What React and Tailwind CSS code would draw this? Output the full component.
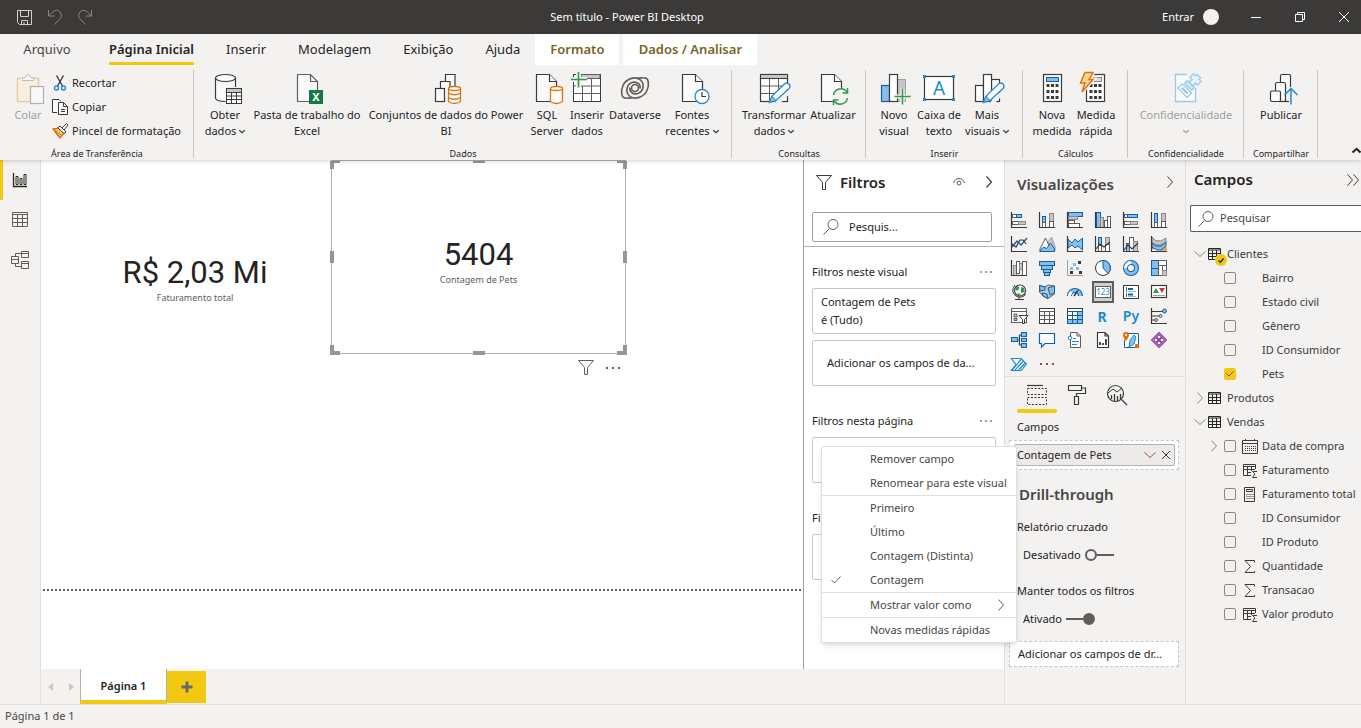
import React, { useState } from 'react';

/* ---------- colours shared by the drawings ---------- */
const INK = '#3b3a39';
const GREY = '#605e5c';
const BLUE = '#1e8bcd';
const NAVY = '#1060a8';
const SKY = '#83beec';
const ORANGE = '#e0700a';
const GREEN = '#2f9a4c';

const Svg = ({ w = 16, h = 16, box, className = '', children }) => (
    <svg
        width={w}
        height={h}
        viewBox={box || `0 0 ${w} ${h}`}
        fill="none"
        stroke={INK}
        className={`shrink-0 overflow-visible ${className}`}
        aria-hidden="true"
    >
        {children}
    </svg>
);

const Chevron = ({ dir = 'down', w = 12, h = 6, color = GREY, stroke = 1, className = '' }) => {
    const paths = {
        down: 'M0.5 0.5 L6 5.5 L11.5 0.5',
        right: 'M0.5 0.5 L5.5 6 L0.5 11.5',
    };
    return (
        <Svg w={w} h={h} box={dir === 'down' ? '0 0 12 6' : '0 0 6 12'} className={className}>
            <path d={paths[dir]} stroke={color} strokeWidth={stroke} />
        </Svg>
    );
};

/* ---------- ribbon drawings, all on a 32px grid ---------- */
const Page = ({ x = 5.5 }) => (
    <g fill="#fafafa" strokeWidth="1.2">
        <path d={`M${x} 2.5 h13 l7 7 v20 h-20 z`} />
        <path d={`M${x + 13} 2.5 v7 h7`} />
    </g>
);

const Pencil = ({ x = 11 }) => (
    <g transform={`translate(${x} 31)`}>
        <path d="M0.5 -0.5 L3 -7 L15.5 -19 Q18 -21 20 -19 Q22 -17 20 -14.5 L7 -2.5 Z" fill="#fff" stroke={BLUE} strokeWidth="1.3" />
        <path d="M0.5 -0.5 L3 -7 L7 -2.5 Z" fill={SKY} stroke={BLUE} />
    </g>
);

const Calculator = ({ x = 7.5, screen = SKY, edge = NAVY }) => (
    <g>
        <rect x={x} y="2.5" width="18" height="27" fill="#fff" strokeWidth="1.2" />
        <rect x={x + 3} y="5.5" width="12" height="4" fill={screen} stroke={edge} />
        {[12, 18, 24].map(y => [3, 7.5, 12].map(dx => (
            <rect key={`${y}-${dx}`} x={x + dx} y={y} width="3" height="3" fill={INK} stroke="none" />
        )))}
    </g>
);

const ribbonIcons = {
    paste: (
        <>
            <path d="M9 6.5 H5.5 V29.5 H20 M22 6.5 H26.5 V13" stroke="#ecc9a3" strokeWidth="1.6" />
            <path d="M6.5 8 H25.5 V14 H19 V28.5 H6.5z" fill="#f8efdc" stroke="none" />
            <path d="M10.5 8.5 v-3 h3 q2.5 -6 5 0 h3 v3z" fill="#f8f8f8" stroke="#bdbbb9" />
            <rect x="18.5" y="14.5" width="13" height="17" fill="#f8f8f8" stroke="#b3b0ad" strokeWidth="1.2" />
        </>
    ),
    getData: (
        <>
            <path d="M7 6 V26 Q8 29 16 29 V15 H26 V6z" fill="#fafafa" stroke="none" />
            <path d="M6.5 6 V26 Q7 29.5 16.5 29.5 M26.5 6 V15" strokeWidth="1.2" />
            <ellipse cx="16.5" cy="6" rx="10" ry="3.5" fill="#fafafa" strokeWidth="1.2" />
            <rect x="17.5" y="16.5" width="15" height="15" fill="#fff" />
            <rect x="18" y="17" width="14" height="3" fill="#c8c6c4" stroke="none" />
            <path d="M17.5 20.5 h15 M17.5 24 h15 M17.5 27.5 h15 M22.5 20 v11 M27.5 20 v11" />
        </>
    ),
    excel: (
        <>
            <path d="M6.5 2.5 h13 l7 7 v20 h-20 z M19.5 2.5 v7 h7" fill="#fafafa" stroke={GREY} strokeWidth="1.2" />
            <rect x="18" y="18" width="14" height="14" fill="#107c41" stroke="none" />
            <text x="25" y="29" textAnchor="middle" fontSize="11" fontWeight="700" fill="#fff" stroke="none">X</text>
        </>
    ),
    datasets: (
        <>
            <g fill="#fafafa" strokeWidth="1.2">
                <path d="M15.5 9 V2.5 H25 V14" />
                <path d="M10.5 16 V9.5 H20 V29" />
                <rect x="5.5" y="16.5" width="9" height="13" />
            </g>
            <g fill="#fff" stroke={ORANGE} strokeWidth="1.3">
                <path d="M18.5 16.5 V29.5 Q24.5 33.5 30.5 29.5 V16.5" />
                <ellipse cx="24.5" cy="16.5" rx="6" ry="2" />
                <path d="M18.5 21 Q24.5 24.5 30.5 21 M18.5 25.5 Q24.5 29 30.5 25.5" fill="none" />
            </g>
        </>
    ),
    sql: (
        <>
            <Page />
            <g fill="#fff" stroke={ORANGE} strokeWidth="1.3">
                <path d="M19.5 16.5 V29.5 Q25.5 33.5 31.5 29.5 V16.5" />
                <ellipse cx="25.5" cy="16.5" rx="6" ry="2" />
            </g>
        </>
    ),
    enterData: (
        <>
            <rect x="2.5" y="2.5" width="27" height="27" fill="#fff" />
            <rect x="10" y="2.5" width="19" height="4" fill="#c8c6c4" stroke={GREY} />
            <path d="M2.5 14 h27 M2.5 21.5 h27 M11.5 14 v15 M20.5 7 v22" stroke={GREY} />
            <path d="M0 7.5 h16 M7.5 0 v15.5" stroke="#f3f2f1" strokeWidth="5" />
            <path d="M0 7.5 h16 M7.5 0 v15.5" stroke={GREEN} strokeWidth="1.6" />
        </>
    ),
    dataverse: (
        <g stroke={GREY} strokeWidth="1.6">
            <path d="M7.5 26 C2 27 1.500 19 4 13.500 C7 7 16 3.500 21.500 8 C26 12 24.500 19.500 19 21.500 C14 23 10 19.500 11 15.500" />
            <path d="M24.500 6 C30 5 30.500 13 28 18.500 C25 25 16 28.500 10.500 24 C6 20 7.500 12.500 13 10.500 C18 9 22 12.500 21 16.500" />
            <circle cx="16" cy="16" r="3.500" />
            <path d="M7.5 26 Q11 26.500 14 25.500 M24.500 6 Q21 5.500 18 6.500" />
        </g>
    ),
    recent: (
        <>
            <Page x={6.5} />
            <circle cx="26" cy="24.5" r="7" fill="#fff" stroke={BLUE} strokeWidth="1.3" />
            <path d="M26 20 v4.5 h4" strokeWidth="1.2" />
        </>
    ),
    transform: (
        <>
            <rect x="2.5" y="2.5" width="27" height="27" fill="#fff" strokeWidth="1.2" />
            <rect x="2.5" y="2.5" width="27" height="4" fill="#c8c6c4" />
            <path d="M2.5 14 h27 M2.5 21.5 h27 M11.5 7 v22 M20.5 7 v22" stroke={GREY} />
            <path d="M19 31 L31 19" stroke="#f3f2f1" strokeWidth="5" />
            <Pencil x={11} />
        </>
    ),
    refresh: (
        <>
            <Page x={4.5} />
            <circle cx="23.5" cy="24.5" r="8" fill="#f3f2f1" stroke="none" />
            <g stroke={GREEN} strokeWidth="1.5">
                <path d="M16.5 23 a7.3 7.3 0 0 1 13.5 -2.5 M30.5 26 a7.3 7.3 0 0 1 -13.5 2.5" />
                <path d="M30.5 16 v5 h-5 M16.5 33 v-5 h5" />
            </g>
        </>
    ),
    newVisual: (
        <>
            <rect x="3.5" y="13.5" width="8" height="16" fill={SKY} stroke={NAVY} strokeWidth="1.2" />
            <rect x="19.5" y="7.5" width="8" height="22" fill="#c8c6c4" stroke="#a19f9d" />
            <rect x="11.5" y="2.5" width="8" height="27" fill="#fff" strokeWidth="1.2" />
            <path d="M16 24.5 h16 M24.5 16.5 v16" stroke="#f3f2f1" strokeWidth="4" />
            <path d="M16.5 24.5 h16 M24.5 16.5 v16" stroke={GREEN} strokeWidth="1.5" />
        </>
    ),
    textBox: (
        <>
            <rect x="1.5" y="4.5" width="29" height="23" fill="#fff" strokeWidth="1.2" />
            {[[0, 3], [29, 3], [0, 26], [29, 26]].map(([x, y]) => (
                <rect key={`${x}-${y}`} x={x} y={y} width="3" height="3" fill={BLUE} stroke="none" />
            ))}
            <text x="16" y="23" textAnchor="middle" fontSize="19" fill={BLUE} stroke="none">A</text>
        </>
    ),
    moreVisuals: (
        <>
            <g fill="#fff" strokeWidth="1.2">
                <rect x="4.5" y="13.5" width="8" height="16" />
                <rect x="20.5" y="7.5" width="8" height="22" />
                <rect x="12.5" y="2.5" width="8" height="27" />
            </g>
            <path d="M21 31 L30 22" stroke="#f3f2f1" strokeWidth="4" />
            <Pencil x={12} />
        </>
    ),
    measure: <Calculator />,
    quickMeasure: (
        <>
            <Calculator x={6.5} screen="#e1dfdd" edge="#8a8886" />
            <path d="M5 0.5 h8 l-4 7 h4 L2 20 l3 -9 H0.5z" fill="#f8d98a" stroke="#f3f2f1" strokeWidth="4" />
            <path d="M5 0.5 h8 l-4 7 h4 L2 20 l3 -9 H0.5z" fill="#fbd68b" stroke={ORANGE} strokeWidth="1.4" />
        </>
    ),
    sensitivity: (
        <g stroke="#9cc9e4" strokeWidth="1.3">
            <path d="M17 2.5 H5.5 V29.5 H25.5 V16" fill="#f8fafb" />
            <g transform="translate(16 17) rotate(-45)">
                <path d="M3 -5 h4 v10 h-4 z" fill="#d4e8f4" />
                <path d="M7 -2.5 h4 v-3 h5 v3 h2 v5 h-2 v3 h-5 v-3 h-4z" fill="#e6f2f9" />
            </g>
            <g transform="translate(15 19) rotate(45)">
                <rect x="-7" y="-3" width="13" height="6" fill="#fff" />
                <path d="M-4.5 0 h8" strokeWidth="2.5" />
            </g>
        </g>
    ),
    publish: (
        <>
            <g fill="#fafafa" strokeWidth="1.2">
                <path d="M15.5 11 V4 Q15.5 2.5 17 2.5 H24 Q25.5 2.5 25.5 4 V15" />
                <path d="M10.5 19 V12 Q10.5 10.5 12 10.5 H19 Q20.5 10.5 20.5 12 V29" />
                <path d="M14 29.5 H26" />
                <rect x="5.5" y="19" width="10" height="10.5" rx="1.5" />
            </g>
            <path d="M26 17 V32" stroke="#f3f2f1" strokeWidth="4" />
            <path d="M26 17 V32.5 M19.5 23 L26 16.5 L32.5 23" stroke={BLUE} strokeWidth="1.5" />
        </>
    ),
};

const ribbonGroups = [
    {
        label: 'Dados',
        width: 'w-[538px]',
        items: [
            { icon: 'getData', lines: ['Obter', 'dados'], menu: true, width: 'w-[46px]' },
            { icon: 'excel', lines: ['Pasta de trabalho do', 'Excel'], width: 'w-[118px]' },
            { icon: 'datasets', lines: ['Conjuntos de dados do Power', 'BI'], width: 'w-[160px]' },
            { icon: 'sql', lines: ['SQL', 'Server'], width: 'w-[42px]' },
            { icon: 'enterData', lines: ['Inserir', 'dados'], width: 'w-[38px]' },
            { icon: 'dataverse', lines: ['Dataverse'], width: 'w-[58px]' },
            { icon: 'recent', lines: ['Fontes', 'recentes'], menu: true, width: 'w-[56px]' },
        ],
    },
    {
        label: 'Consultas',
        width: 'w-[134px]',
        items: [
            { icon: 'transform', lines: ['Transformar', 'dados'], menu: true, width: 'w-[68px]' },
            { icon: 'refresh', lines: ['Atualizar'], width: 'w-[50px]' },
        ],
    },
    {
        label: 'Inserir',
        width: 'w-[157px]',
        items: [
            { icon: 'newVisual', lines: ['Novo', 'visual'], width: 'w-10' },
            { icon: 'textBox', lines: ['Caixa de', 'texto'], width: 'w-[50px]' },
            { icon: 'moreVisuals', lines: ['Mais', 'visuais'], menu: true, width: 'w-[46px]' },
        ],
    },
    {
        label: 'Cálculos',
        width: 'w-[105px]',
        items: [
            { icon: 'measure', lines: ['Nova', 'medida'], width: 'w-[42px]' },
            { icon: 'quickMeasure', lines: ['Medida', 'rápida'], width: 'w-[46px]' },
        ],
    },
    {
        label: 'Confidencialidade',
        width: 'w-[116px]',
        items: [{ icon: 'sensitivity', lines: ['Confidencialidade', ''], menu: true, disabled: true, width: 'w-full' }],
    },
    {
        label: 'Compartilhar',
        width: 'w-[74px]',
        items: [{ icon: 'publish', lines: ['Publicar'], width: 'w-full' }],
    },
];

const RibbonButton = ({ item }) => (
    <button className={`flex flex-col items-center gap-[3px] shrink-0 ${item.width} ${item.disabled ? 'text-[#a19f9d]' : ''}`} disabled={item.disabled}>
        <Svg w={32} h={32}>{ribbonIcons[item.icon]}</Svg>
        <span className="flex flex-col items-center leading-4 whitespace-nowrap">
            {item.lines.map((line, i) => (
                <span key={i} className="flex items-center gap-[3px] h-4">
                    {line}
                    {item.menu && i === item.lines.length - 1 && (
                        <Chevron w={6} h={3} color={item.disabled ? '#a19f9d' : INK} stroke={2.5} />
                    )}
                </span>
            ))}
        </span>
    </button>
);

const RibbonGroup = ({ label, width, children }) => (
    <section className={`relative flex flex-col shrink-0 ${width} after:absolute after:right-0 after:top-[5px] after:bottom-[2px] after:w-px after:bg-[#c8c6c4]`}>
        <div className="flex px-2 pt-[7px] grow">{children}</div>
        <h2 className="text-[9px] leading-[13px] text-center">{label}</h2>
    </section>
);

const tabs = ['Página Inicial', 'Inserir', 'Modelagem', 'Exibição', 'Ajuda'];

const TitleBar = () => (
    <header className="flex items-center h-[34px] shrink-0 bg-[#3b3a39] text-white">
        <div className="flex items-center gap-4 pl-[17px]">
            <button aria-label="Salvar">
                <Svg w={15} h={15}>
                    <path d="M0.5 0.5 h14 v14 h-12 l-2 -2z M3.5 0.5 v6 h8 v-6 M4.5 14.5 v-4 h6 v4 M7 14 v-2" stroke="#d2d0ce" />
                </Svg>
            </button>
            <button aria-label="Desfazer">
                <Svg w={14} h={16}>
                    <path d="M0.5 1 V7 H6.5 M0.5 7 L4.5 3 Q9 -0.5 12 3 Q15 7 11.5 10.5 L6.5 15.5" stroke="#8a8886" />
                </Svg>
            </button>
            <button aria-label="Refazer">
                <Svg w={14} h={16}>
                    <path d="M13.5 1 V7 H7.5 M13.5 7 L9.5 3 Q5 -0.5 2 3 Q-1 7 2.5 10.5 L7.5 15.5" stroke="#8a8886" />
                </Svg>
            </button>
        </div>
        <h1 className="flex-1 text-center">Sem título - Power BI Desktop</h1>
        <div className="flex items-center">
            <button className="flex items-center gap-[9px] pr-[15px]">
                Entrar
                <span className="size-4 rounded-full bg-[#f3f2f1]" />
            </button>
            <button className="grid place-items-center w-11 h-[34px]" aria-label="Minimizar">
                <Svg w={10} h={10}><path d="M0 5.5 h10" stroke="#fff" /></Svg>
            </button>
            <button className="grid place-items-center w-11 h-[34px]" aria-label="Restaurar">
                <Svg w={10} h={10}><path d="M0.5 2.5 h7 v7 h-7z M2.5 2 v-1.5 h7 v7 h-1.5" stroke="#fff" /></Svg>
            </button>
            <button className="grid place-items-center w-[39px] h-[34px] pl-[5px]" aria-label="Fechar">
                <Svg w={10} h={10}><path d="M0 0 L10 10 M10 0 L0 10" stroke="#fff" /></Svg>
            </button>
        </div>
    </header>
);

const MenuTabs = () => (
    <nav className="flex h-[31px] shrink-0 text-[13px] whitespace-nowrap">
        <button className="w-[94px] text-[#484644]">Arquivo</button>
        <div className="flex gap-8 pl-[15px]">
            {tabs.map((tab, i) => (
                <button key={tab} className={i === 0 ? 'border-b-[3px] border-[#f2c811] pt-[3px] font-semibold' : ''}>{tab}</button>
            ))}
        </div>
        <div className="flex gap-1 pl-[15px] text-[#7a6126] font-semibold">
            <button className="bg-white w-[84px]">Formato</button>
            <button className="bg-white w-[134px]">Dados / Analisar</button>
        </div>
    </nav>
);

const Ribbon = () => (
    <div className="relative flex h-[95px] shrink-0">
        <RibbonGroup label="Área de Transferência" width="w-[194px]">
            <button className="flex flex-col items-center gap-[3px] w-10 leading-4 text-[#a19f9d]" disabled>
                <Svg w={32} h={32}>{ribbonIcons.paste}</Svg>
                Colar
            </button>
            <div className="flex flex-col pl-1 -mt-px">
                <button className="flex items-center gap-1 h-6">
                    <Svg>
                        <path d="M4.5 0.5 L10.5 11 M11.5 0.5 L5.5 11" strokeWidth="1.4" />
                        <circle cx="4.5" cy="13" r="2" stroke={BLUE} strokeWidth="1.4" />
                        <circle cx="11.5" cy="13" r="2" stroke={BLUE} strokeWidth="1.4" />
                    </Svg>
                    Recortar
                </button>
                <button className="flex items-center gap-1 h-6">
                    <Svg>
                        <path d="M5 13.5 H0.5 V0.5 H7 L9 2.5" fill="#fafafa" />
                        <path d="M6.5 3.5 h5 l4 4 v8 h-9z M11.5 3.5 v4 h4 M9 10.5 h4 M9 12.5 h4" fill="#fafafa" />
                    </Svg>
                    Copiar
                </button>
                <button className="flex items-center gap-1 h-6 whitespace-nowrap">
                    <Svg>
                        <path d="M1 6 L7 5 L12 10 L8 15 Z" fill="#f9c27a" stroke={ORANGE} strokeWidth="1.3" />
                        <path d="M1 6 L9 12 M3 9 L8 15" stroke={ORANGE} />
                        <path d="M6 5 L8 3 L14 9 L12 10.5z M10 5 L14.5 0.5 L16 2 L12 7" fill="#fff" />
                    </Svg>
                    Pincel de formatação
                </button>
            </div>
        </RibbonGroup>
        {ribbonGroups.map(group => (
            <RibbonGroup key={group.label} label={group.label} width={group.width}>
                {group.items.map(item => <RibbonButton key={item.icon} item={item} />)}
            </RibbonGroup>
        ))}
        <button className="self-end ml-auto pb-[7px]" aria-label="Recolher faixa de opções">
            <Svg w={9} h={5}><path d="M0.5 4.5 L4.5 0.8 L8.5 4.5" stroke="#252423" strokeWidth="2" /></Svg>
        </button>
    </div>
);

/* ---------- left rail ---------- */
const ViewRail = () => (
    <nav className="flex flex-col w-[41px] shrink-0 border-r border-[#e1dfdd] bg-[#f3f2f1]">
        <button className="grid place-items-center h-10 border-l-[3px] border-[#f2c811] pr-[3px]" aria-label="Relatório">
            <Svg w={14} h={14}>
                <path d="M0.5 0 V13.5 H14" strokeWidth="1.3" stroke="#252423" />
                <path d="M3 3.5 h2 v8 h-2z M7 5.5 h2 v6 h-2z M11 1.5 h2 v10 h-2z" stroke="#252423" />
            </Svg>
        </button>
        <button className="grid place-items-center h-10" aria-label="Dados">
            <Svg w={16} h={16}>
                <path d="M0.5 0.5 h15 v14 h-15z M0.5 2.5 h15 M0.5 6.5 h15 M0.5 10.5 h15 M5.5 3 v11 M10.5 3 v11" stroke={GREY} />
            </Svg>
        </button>
        <button className="grid place-items-center h-10" aria-label="Modelo">
            <Svg w={18} h={18}>
                <path d="M0.5 5.5 h7 v7 h-7z M10.5 0.5 h7 v6 h-7z M10.5 10.5 h7 v7 h-7z M0.5 8.5 h7 M10.5 2.5 h7 M10.5 12.5 h7 M4.5 5 V2.5 H10 M4.5 13 V15.5 H10" stroke={GREY} />
            </Svg>
        </button>
    </nav>
);

/* ---------- report canvas ---------- */
const CardValue = ({ value, label }) => (
    <div className="flex flex-col items-center">
        <span className="font-[Roboto,sans-serif] text-[31px] leading-9 text-[#252423]">{value}</span>
        <span className="text-[9px] leading-[14px] text-[#605e5c]">{label}</span>
    </div>
);

const handles = [
    'left-[-2px] top-0 w-[10px] h-2 border-l-4 border-t-2',
    'right-[-2px] top-0 w-[10px] h-2 border-r-4 border-t-2',
    'left-[-2px] bottom-[-2px] w-[10px] h-[10px] border-l-4 border-b-4',
    'right-[-2px] bottom-[-2px] w-[10px] h-[10px] border-r-4 border-b-4',
    'left-1/2 -translate-x-1/2 top-0 w-3 h-0 border-t-2',
    'left-1/2 -translate-x-1/2 bottom-[-2px] w-3 h-0 border-b-4',
    'top-1/2 -translate-y-1/2 left-[-2px] w-0 h-3 border-l-4',
    'top-1/2 -translate-y-1/2 right-[-2px] w-0 h-3 border-r-4',
];

const ReportCanvas = () => (
    <div className="relative flex-1 bg-white">
        <div className="absolute left-[9px] top-[95px] w-[290px]">
            <CardValue value="R$ 2,03 Mi" label="Faturamento total" />
        </div>
        <div className="absolute left-[290px] top-0 w-[295px] h-[194px] border border-[#b3b0ad] pt-[76px]">
            <CardValue value="5404" label="Contagem de Pets" />
            {handles.map(cls => <i key={cls} className={`absolute border-[#979593] ${cls}`} />)}
            <div className="absolute top-full right-[5px] mt-[7px] flex items-center gap-3">
                <button aria-label="Filtros do visual">
                    <Svg w={16} h={15}><path d="M0.5 0.5 h15 l-6 7 v7 h-3 v-7z" stroke={GREY} /></Svg>
                </button>
                <button aria-label="Mais opções" className="flex gap-1">
                    {[0, 1, 2].map(n => <i key={n} className="size-[2px] bg-[#605e5c]" />)}
                </button>
            </div>
        </div>
        <div className="absolute left-[2px] right-[2px] top-[429px] h-[2px] bg-[repeating-linear-gradient(90deg,#605e5c_0_2px,transparent_2px_4px)]" />
    </div>
);

const PageTabs = () => (
    <div className="flex h-[35px] shrink-0 bg-[#f3f2f1]">
        <div className="flex items-center justify-center gap-4 w-[39px]">
            <button aria-label="Página anterior"><Svg w={5} h={8}><path d="M5 0 L0 4 L5 8z" fill="#c8c6c4" stroke="none" /></Svg></button>
            <button aria-label="Próxima página"><Svg w={5} h={8}><path d="M0 0 L5 4 L0 8z" fill="#c8c6c4" stroke="none" /></Svg></button>
        </div>
        <button className="w-[87px] bg-white border-x border-x-[#b3b0ad] border-b-4 border-b-[#f2c811] pt-1 font-semibold">Página 1</button>
        <button className="grid place-items-center w-[39px] h-8 mt-[2px] bg-[#f2c811]" aria-label="Nova página">
            <Svg w={12} h={12}><path d="M0.5 6 h11 M6 0.5 v11" stroke="#6b6a68" strokeWidth="3" /></Svg>
        </button>
    </div>
);

/* ---------- filters ---------- */
const SearchGlyph = () => (
    <Svg w={16} h={16}>
        <circle cx="10" cy="5.5" r="5" stroke={GREY} />
        <path d="M6.5 9.5 L0.5 15.5" stroke={GREY} />
    </Svg>
);

const Dots = () => (
    <span className="flex gap-[3px]">
        {[0, 1, 2].map(n => <i key={n} className="size-[2px] bg-[#a19f9d]" />)}
    </span>
);

const FilterSection = ({ title, children }) => (
    <section className="flex flex-col gap-[6px] px-2">
        <div className="flex items-center justify-between h-[26px] -mb-[3px] pr-1 whitespace-nowrap">
            <h3>{title}</h3>
            <button aria-label={`Opções: ${title}`}><Dots /></button>
        </div>
        {children}
    </section>
);

const DropZone = () => (
    <div className="flex items-center h-[46px] rounded-[2px] border border-[#c8c6c4] px-[14px] whitespace-nowrap">
        Adicionar os campos de da...
    </div>
);

const FiltersPane = () => (
    <aside className="flex flex-col w-[201px] shrink-0 bg-white border-l border-[#a19f9d] text-[#252423] overflow-hidden">
        <div className="flex items-center h-11 px-3">
            <Svg w={16} h={15}><path d="M0.5 0.5 h15 l-6 7 v7 h-3 v-7z" /></Svg>
            <h2 className="ml-2 text-[15px] font-semibold">Filtros</h2>
            <button className="ml-auto" aria-label="Mostrar filtros">
                <Svg w={12} h={8}>
                    <path d="M0.5 5 Q2 0.5 6 0.5 Q10 0.5 11.5 5" stroke={GREY} />
                    <circle cx="6" cy="5" r="2" stroke={GREY} />
                </Svg>
            </button>
            <button className="ml-[21px]" aria-label="Recolher filtros"><Chevron dir="right" w={6} h={12} color={INK} stroke={1.2} /></button>
        </div>
        <div className="pl-2 pr-3 pt-2 pb-1 border-b border-[#b3b0ad]">
            <label className="flex items-center gap-[10px] h-[30px] rounded-[2px] border border-[#a19f9d] pl-[10px]">
                <SearchGlyph />
                <input className="w-full min-w-0 outline-none placeholder:text-[#252423]" placeholder="Pesquis..." aria-label="Pesquisar filtros" />
            </label>
        </div>
        <div className="flex flex-col gap-[22px] pt-3">
            <FilterSection title="Filtros neste visual">
                <div className="rounded-[2px] border border-[#c8c6c4] h-[46px] px-2 py-1 leading-[18px]">
                    <p>Contagem de Pets</p>
                    <p>é (Tudo)</p>
                </div>
                <DropZone />
            </FilterSection>
            <FilterSection title="Filtros nesta página"><DropZone /></FilterSection>
            <section className="flex flex-col gap-[3px] px-2">
                <h3 className="leading-[26px]">Fi</h3>
                <div className="h-[46px] rounded-[2px] border border-[#c8c6c4]" />
            </section>
        </div>
    </aside>
);

/* ---------- visualization gallery, 16px grid ---------- */
const Axis = () => <path d="M0.5 0 V15.5 H16" strokeWidth="1.2" />;
const Bar = ({ x, y, w, h, c = 'b' }) => {
    const fills = { b: [SKY, NAVY], g: ['#c8c6c4', '#8a8886'], w: ['#fff', GREY] };
    return <rect x={x + 0.5} y={y + 0.5} width={w} height={h} fill={fills[c][0]} stroke={fills[c][1]} />;
};

const gallery = [
    ['Barras empilhadas', <><Bar x={1} y={2} w={4} h={3} c="w" /><Bar x={5} y={2} w={5} h={3} /><Bar x={1} y={9} w={6} h={3} c="w" /><Bar x={7} y={9} w={7} h={3} c="g" /><Axis /></>],
    ['Colunas empilhadas', <><Bar x={3} y={4} w={3} h={6} /><Bar x={3} y={10} w={3} h={5} c="w" /><Bar x={10} y={1} w={4} h={8} c="g" /><Bar x={10} y={9} w={4} h={6} c="w" /><Axis /></>],
    ['Barras agrupadas', <><Bar x={1} y={0} w={14} h={4} /><Bar x={1} y={4} w={9} h={3} c="g" /><Bar x={1} y={8} w={6} h={3} c="w" /><Bar x={1} y={11} w={11} h={4} c="w" /><Axis /></>],
    ['Colunas agrupadas', <><Bar x={1} y={0} w={4} h={15} /><Bar x={5} y={5} w={3} h={10} c="g" /><Bar x={9} y={8} w={3} h={7} c="w" /><Bar x={12} y={4} w={3} h={11} c="w" /><Axis /></>],
    ['Barras 100%', <><Bar x={1} y={2} w={3} h={3} c="w" /><Bar x={4} y={2} w={10} h={3} /><Bar x={1} y={9} w={6} h={3} c="w" /><Bar x={7} y={9} w={7} h={3} c="g" /><Axis /></>],
    ['Colunas 100%', <><Bar x={3} y={1} w={3} h={9} /><Bar x={3} y={10} w={3} h={5} c="w" /><Bar x={10} y={1} w={4} h={8} c="g" /><Bar x={10} y={9} w={4} h={6} c="w" /><Axis /></>],
    ['Linhas', <><path d="M1 11 L6 5 L10 9 L16 2" stroke={NAVY} strokeWidth="1.4" /><path d="M1 8 L5 11 L9 4 L12 4 L15 8" strokeWidth="1.2" /><Axis /></>],
    ['Área', <><path d="M8 8 L12.5 1 L16 10 V15 H9z" fill="#c8c6c4" stroke="#a19f9d" /><path d="M0.5 14 L6.5 2 L12 14z" fill="#fff" stroke={GREY} /><path d="M0.5 15.5 L4.500 11 L7.500 12.500 L11.500 7 L15.500 13 V15.500z" fill={SKY} stroke={NAVY} /></>],
    ['Área empilhada', <><path d="M1 3 L5 7 L8 3 L11 6 L15.5 2 V14 L11 10 L8 12 L5 9 L1 12z" fill={SKY} stroke={NAVY} /><Axis /></>],
    ['Linhas e colunas empilhadas', <><Bar x={3} y={1} w={3} h={8} /><Bar x={3} y={9} w={3} h={6} c="w" /><Bar x={10} y={1} w={4} h={7} c="g" /><Bar x={10} y={8} w={4} h={7} c="w" /><path d="M1 13 L5 8 L9 11 L15 6" strokeWidth="1.2" /><Axis /></>],
    ['Linhas e colunas agrupadas', <><Bar x={3} y={7} w={3} h={8} /><Bar x={6} y={1} w={4} h={14} c="w" /><Bar x={10} y={5} w={4} h={10} c="g" /><path d="M1 14 L5 9 L9 13 L15 7" strokeWidth="1.2" /><Axis /></>],
    ['Faixas', <><path d="M1 8 L5 5 H9 L15 11 V14 H10 L6 10 L1 13z" fill="#f6b26b" stroke={ORANGE} /><path d="M1 1 L5 5 H10 L15 2 V6 L10 9 H5 L1 6z" fill="#c8c6c4" stroke="#8a8886" /><path d="M1 7 L5 10 H10 L15 6 V10 L10 14 H6 L1 11z" fill={SKY} stroke={NAVY} /><Axis /></>],
    ['Cascata', <><Bar x={2} y={5} w={3} h={10} c="g" /><Bar x={5} y={1} w={3} h={12} c="w" /><Bar x={8} y={3} w={3} h={6} c="g" /><Bar x={11} y={1} w={4} h={14} c="w" /><Axis /></>],
    ['Funil', <><Bar x={0} y={1} w={15} h={4} /><Bar x={2} y={5} w={11} h={4} /><Bar x={4} y={9} w={7} h={3} /><Bar x={5} y={12} w={5} h={3} /></>],
    ['Dispersão', <><path d="M0.5 0 V15.5 H16" stroke="#a19f9d" /><g stroke="none"><rect x="11" y="1" width="3" height="3" fill={INK} /><rect x="6" y="3" width="3" height="3" fill={SKY} /><rect x="3" y="7" width="3" height="3" fill={SKY} /><rect x="9" y="7" width="3" height="3" fill={SKY} /><rect x="3" y="11" width="3" height="3" fill={INK} /><rect x="12" y="11" width="3" height="3" fill={INK} /></g></>],
    ['Pizza', <><circle cx="8" cy="8" r="7.5" fill="#fff" /><path d="M8 0.5 A7.5 7.5 0 0 1 13 13.5 L8 8z" fill={SKY} stroke={NAVY} /></>],
    ['Rosca', <><circle cx="8" cy="8" r="5.5" stroke={NAVY} strokeWidth="5" /><circle cx="8" cy="8" r="5.5" stroke={SKY} strokeWidth="3" /><path d="M8 2.5 A5.5 5.5 0 0 0 2.5 8" stroke="#fff" strokeWidth="3" /></>],
    ['Treemap', <><Bar x={0} y={0} w={7} h={8} /><Bar x={0} y={8} w={7} h={7} /><Bar x={7} y={0} w={8} h={5} c="w" /><Bar x={7} y={5} w={4} h={10} c="w" /><Bar x={11} y={5} w={4} h={5} c="w" /><Bar x={11} y={10} w={4} h={5} c="g" /></>],
    ['Mapa', <><circle cx="9" cy="6.5" r="5.5" fill="#fff" strokeWidth="1.2" /><path d="M6 2 Q9 2 8 5 L6 7 L4 5z M10 3 L13 4 L13.5 8 L10 9z M6 9 L10 10 L8 12z" fill={GREEN} stroke="none" /><path d="M4 1 Q-1 8 5 12 Q11 15 15 10 M8 13 V15.5 M4 15.5 H13" /></>],
    ['Mapa coroplético', <><path d="M0.5 1.5 L6 3 L9 1 L15.5 2 V10 L9 14.5 L4 12 L0.5 8z" fill="#c8c6c4" stroke={GREY} /><path d="M0.5 1.5 L6 3 V6 L1 7z M9 4 L15.5 2 V9 L11 11z M3 9 L8 10 L9 14.5 L4 12z" fill={SKY} stroke={NAVY} /></>],
    ['Medidor', <><path d="M2.5 12 A5.5 5.5 0 0 1 13.5 12" stroke={NAVY} strokeWidth="5" /><path d="M2.5 12 A5.5 5.5 0 0 1 13.5 12" stroke={SKY} strokeWidth="3" /><path d="M2.5 12 A5.5 5.5 0 0 1 4.5 8" stroke="#fff" strokeWidth="3" /><path d="M7 12 L11 6.5" strokeWidth="1.5" /></>],
    ['Cartão', <><rect x="0.5" y="2.5" width="15" height="11" fill="#fff" stroke={GREY} /><text x="8" y="11" fontSize="8" textAnchor="middle" fill={BLUE} stroke="none">123</text></>],
    ['Cartão de várias linhas', <><rect x="0.5" y="1.5" width="15" height="13" fill="#fff" /><path d="M3.5 3 V8 M3.5 9 V13" stroke={GREY} /><path d="M5 5 H10 M5 10.5 H10" stroke={NAVY} strokeWidth="2" /><path d="M5 7.5 H13 M5 12.500 H13" stroke={SKY} /></>],
    ['KPI', <><rect x="0.5" y="1.5" width="15" height="12" fill="#fff" strokeWidth="1.2" /><path d="M2 9 L5 4 L8 9z" fill={GREEN} stroke="none" /><path d="M8 4 H14 L11 9z" fill="#d13438" stroke="none" /><path d="M2 11.5 H14" stroke="#a19f9d" /></>],
    ['Segmentação de dados', <><rect x="0.5" y="0.5" width="15" height="14" fill="#fff" stroke={GREY} /><path d="M0.5 3.5 h15" stroke={GREY} /><path d="M3 6 h3 v3 h-3z M3 10.5 h3 v2 h-3z" fill="#c8c6c4" stroke={GREY} /><path d="M8 7.5 h9 l-3.5 4 v4 h-2 v-4z" fill="#fff" stroke={INK} /></>],
    ['Tabela', <><rect x="0.5" y="0.5" width="15" height="15" fill="#fff" /><path d="M0.5 3.5 h15 M0.5 7.5 h15 M0.5 11.5 h15 M5.5 3 v12 M10.5 3 v12" stroke={GREY} /></>],
    ['Matriz', <><rect x="0.5" y="0.5" width="15" height="15" fill="#fff" /><path d="M10.5 3.5 h5 v12 h-15 v-4 h10z" fill={SKY} stroke={NAVY} /><path d="M0.5 3.5 h15 M0.5 7.5 h15 M0.5 11.5 h15 M5.5 3 v12 M10.5 3 v12" stroke={NAVY} /></>],
    ['Visual R', <text x="7" y="13.5" fontSize="14" fontWeight="700" textAnchor="middle" fill={BLUE} stroke="none">R</text>],
    ['Visual Python', <text x="8" y="12.5" fontSize="14" fontWeight="600" textAnchor="middle" fill={BLUE} stroke="none">Py</text>],
    ['Principais influenciadores', <><path d="M1 3.5 H12 M1 8 H9 M1 12 H4" /><circle cx="13.5" cy="3" r="2" fill={SKY} stroke={NAVY} /><circle cx="9.5" cy="8" r="1.5" fill="#c8c6c4" stroke={GREY} /><circle cx="5" cy="12" r="1.5" fill="#c8c6c4" stroke={GREY} /><Axis /></>],
    ['Árvore hierárquica', <><path d="M5 8 H9 M8.5 3 V13 M8 3 H11 M8 13 H11" strokeWidth="1.2" /><Bar x={0} y={5} w={6} h={4} /><Bar x={10} y={0} w={5} h={4} /><Bar x={10} y={6} w={5} h={3} /><Bar x={10} y={11} w={5} h={4} /></>],
    ['Perguntas e respostas', <path d="M0.5 1.5 H15.5 V11.5 H6 L2.5 15 V11.5 H0.5z" fill="#fff" stroke={NAVY} strokeWidth="1.2" />],
    ['Narrativa inteligente', <><path d="M3.5 0.5 H10 L13.5 4 V15.5 H3.5z M10 0.5 V4 H13.5" fill="#fff" stroke={GREY} /><circle cx="3" cy="6" r="1.8" fill="#fff" stroke={BLUE} /><path d="M6 6.5 h3 M5 9.5 h7 M5 12.5 h5" stroke={BLUE} /></>],
    ['Relatório paginado', <><path d="M2.5 0.5 H10 L13.5 4 V15.5 H2.5z M10 0.5 V4 H13.5" fill="#fff" strokeWidth="1.2" /><path d="M5 13 V10 M8 13 V11 M11 13 V7" strokeWidth="1.8" /></>],
    ['Mapas do ArcGIS', <><path d="M5 1.5 H15.5 V15.5 H1.5 V9z" fill="#fff" stroke={NAVY} /><path d="M7 8 L11 3 L13 5 L11 12 L6 15z" fill={SKY} stroke={BLUE} /><path d="M0 3 A3 3 0 0 1 6 3 Q6 5 3 9 Q0 5 0 3z" fill={ORANGE} stroke="none" /><circle cx="3" cy="3" r="1" fill="#fff" stroke="none" /><path d="M12 14 h4 M14 12 v4" stroke={ORANGE} strokeWidth="3" /></>],
    ['Power Apps', <g stroke="#8c3ba1" strokeWidth="1.1" fill="#fff"><path d="M8 0.5 L15.5 8 L8 15.5 L0.5 8z" /><path d="M8 2.5 L10.5 5 L8 7.500 L5.500 5z M8 8.500 L10.500 11 L8 13.500 L5.500 11z M5 5.500 L7.500 8 L5 10.500 L2.500 8z M11 5.500 L13.500 8 L11 10.500 L8.500 8z" /></g>],
    ['Power Automate', <g stroke={BLUE} strokeWidth="1.2"><path d="M0.5 2.5 H10 L15.5 8 L10 14.5 H0.5 L5 8.5z" fill="#fff" /><path d="M1 14 L10.5 3 M4 14 L12.5 5 M7.5 14 L14 7" /></g>],
];

const fieldWellTabs = [
    ['Campos', <><path d="M0 0.5 H16" strokeWidth="1.2" /><path d="M0.5 3.5 H19.5 V9.5 H0.5z M0.5 12.5 H19.5 V19.5 H0.5z" strokeDasharray="2 1.5" /></>],
    ['Formato', <path d="M1.5 0.5 H14.5 V5.5 H1.5z M14.5 3 H18.5 V8.5 H9.5 V11.5 M7.5 11.5 H11.5 V19.5 H7.5z" strokeWidth="1.2" />],
    ['Análise', <><circle cx="8.5" cy="8.5" r="8" strokeWidth="1.2" /><path d="M14.5 14.5 L20 20" strokeWidth="1.2" /><path d="M1 8 L6 4 L10 7 L15 3" /><path d="M4.5 10 V14 M7.5 9 V16 M10.5 11 V16 M13.5 9 V14" strokeWidth="1.3" /></>],
];

const menuGroups = [
    ['Remover campo', 'Renomear para este visual'],
    ['Primeiro', 'Último', 'Contagem (Distinta)', 'Contagem'],
    ['Mostrar valor como'],
    ['Novas medidas rápidas'],
];

const FieldMenu = () => (
    <div role="menu" className="absolute right-[161px] top-[5px] z-20 w-[196px] rounded-[2px] border border-[#e1dfdd] bg-white shadow-md divide-y divide-[#e1dfdd]">
        {menuGroups.map(group => (
            <div key={group[0]}>
                {group.map(entry => (
                    <button key={entry} role="menuitem" className="relative flex items-center w-full h-6 pl-12 text-[#484644] whitespace-nowrap">
                        {entry === 'Contagem' && (
                            <Svg w={10} h={8} className="absolute left-[9px]"><path d="M0.5 4 L3.5 7 L9.5 0.5" stroke={GREY} /></Svg>
                        )}
                        {entry}
                        {entry === 'Mostrar valor como' && <Chevron dir="right" w={6} h={12} className="absolute right-3" />}
                    </button>
                ))}
            </div>
        ))}
    </div>
);

const Toggle = ({ label, state, on, onChange }) => (
    <div className="flex flex-col">
        <span className="leading-5 pl-3">{label}</span>
        <label className="flex items-center gap-1 h-9 pl-[18px]">
            {state}
            <input type="checkbox" role="switch" checked={on} onChange={onChange} className="peer sr-only" aria-label={label} />
            <span className="flex items-center peer-checked:flex-row-reverse">
                <i className="size-3 rounded-full border-2 border-[#605e5c] [.peer:checked+span>&]:bg-[#605e5c]" />
                <i className="w-[17px] h-[2px] bg-[#605e5c]" />
            </span>
        </label>
    </div>
);

const VisualizationsPane = () => {
    const [crossReport, setCrossReport] = useState(false);
    const [keepFilters, setKeepFilters] = useState(true);

    return (
        <aside className="flex flex-col w-[181px] shrink-0 bg-[#f3f2f1] border-l border-[#e1dfdd] text-[#252423]">
            <div className="flex items-center justify-between h-12 px-3">
                <h2 className="text-[15px] font-semibold text-[#484644]">Visualizações</h2>
                <button aria-label="Recolher visualizações" className="-mt-1"><Chevron dir="right" w={6} h={12} color={INK} /></button>
            </div>
            <div className="grid grid-cols-6 w-[168px]">
                {gallery.map(([name, art]) => (
                    <button
                        key={name}
                        title={name}
                        className={`grid place-items-center ${name === 'Cartão' ? 'mx-[3px] my-px h-[22px] border-2 border-[#605e5c] bg-[#d2d0ce]' : 'h-6'}`}
                    >
                        <Svg>{art}</Svg>
                    </button>
                ))}
                <button className="flex items-center justify-center gap-1 h-6" aria-label="Obter mais visuais">
                    <i className="size-[2px] bg-[#a0522d]" /><i className="size-[2px] bg-[#605e5c]" /><i className="size-[2px] bg-[#a0522d]" />
                </button>
            </div>
            <div className="flex h-[37px] border-t border-[#e1dfdd] pl-3">
                {fieldWellTabs.map(([name, art], i) => (
                    <button key={name} title={name} className={`flex justify-center w-10 pt-2 ${i === 0 ? 'relative after:absolute after:bottom-0 after:inset-x-0 after:h-1 after:rounded-full after:bg-[#f2c811]' : ''}`}>
                        <Svg w={20} h={20}>{art}</Svg>
                    </button>
                ))}
            </div>
            <h3 className="pl-3 pt-1 pb-[3px] leading-5">Campos</h3>
            <div className="relative ml-1 mr-[6px] border border-dashed border-[#c8c6c4] bg-white p-[3px] pl-1">
                <div className="flex items-center h-[22px] rounded-[2px] border border-[#b3b0ad] bg-[#edebe9] pl-[2px] pr-1">
                    <span className="grow whitespace-nowrap">Contagem de Pets</span>
                    <button aria-label="Opções do campo"><Chevron color="#a0522d" /></button>
                    <button aria-label="Remover campo" className="ml-[6px]">
                        <Svg w={8} h={8}><path d="M0 0 L8 8 M8 0 L0 8" stroke={INK} /></Svg>
                    </button>
                </div>
                <FieldMenu />
            </div>
            <h2 className="pl-[14px] pt-3 text-[15px] leading-6 font-semibold text-[#484644]">Drill-through</h2>
            <div className="flex flex-col gap-2 pt-[11px]">
                <Toggle label="Relatório cruzado" state="Desativado" on={crossReport} onChange={() => setCrossReport(!crossReport)} />
                <Toggle label="Manter todos os filtros" state="Ativado" on={keepFilters} onChange={() => setKeepFilters(!keepFilters)} />
            </div>
            <div className="ml-1 mr-[6px] mt-1 flex items-center h-[26px] border border-dashed border-[#c8c6c4] bg-white pl-2 whitespace-nowrap">
                Adicionar os campos de dr...
            </div>
        </aside>
    );
};

/* ---------- fields ---------- */
const TableGlyph = ({ checked }) => (
    <span className="relative mr-[6px]">
        <Svg w={13} h={12}>
            <path d="M0.5 0.5 h12 v11 h-12z M0.5 2 h12 M0.5 5.5 h12 M0.5 8.5 h12 M4.5 2 v9 M8.5 2 v9" stroke="#252423" />
        </Svg>
        {checked && (
            <i className="absolute left-[7px] top-[6px] grid place-items-center size-3 rounded-full bg-[#f2c811]">
                <Svg w={6} h={5}><path d="M0.5 2.5 L2.5 4.2 L5.5 0.5" strokeWidth="1.3" stroke="#252423" /></Svg>
            </i>
        )}
    </span>
);

const fieldGlyphs = {
    date: <><path d="M0.5 1.5 h15 v13 h-15z M0.5 4.5 h15 M3.5 0 v2 M12.5 0 v2" /><path d="M3 7.5 h11 M3 9.5 h11 M3 11.5 h11" strokeDasharray="1 1" /></>,
    column: <><path d="M13.5 6 V1.5 H1.5 V12.5 H9 M1.5 3.5 H13.5 M5.5 3.5 V12 M9.5 3.5 V8 M1.5 6.5 H13 M5 9.5 H9" /><path d="M15 8.5 H10.5 L13 11 L10.5 14.5 H15" /></>,
    calc: <><path d="M2.5 0.5 h10 v14 h-10z M4.5 2.5 h6 v2 h-6z" /><path d="M4.5 7.5 h7 M4.5 9.5 h7 M4.5 11.5 h7" strokeDasharray="1 1" /></>,
    sum: <path d="M12.5 3.5 V1.5 H3 L8.5 7.5 L3 13.5 H12.5 V12" />,
};

const tables = [
    { name: 'Clientes', open: true, used: true, fields: [['Bairro'], ['Estado civil'], ['Gênero'], ['ID Consumidor'], ['Pets', null, true]] },
    { name: 'Produtos', open: false, fields: [] },
    {
        name: 'Vendas',
        open: true,
        fields: [
            ['Data de compra', 'date'],
            ['Faturamento', 'column'],
            ['Faturamento total', 'calc'],
            ['ID Consumidor'],
            ['ID Produto'],
            ['Quantidade', 'sum'],
            ['Transacao', 'sum'],
            ['Valor produto', 'column'],
        ],
    },
];

const FieldRow = ({ name, glyph, initial }) => {
    const [checked, setChecked] = useState(!!initial);
    return (
        <li className="flex items-center h-6 pl-[23px]">
            <span className="w-[15px] shrink-0">
                {glyph === 'date' && <Chevron dir="right" w={6} h={12} color="#8a8886" className="ml-[2px]" />}
            </span>
            <label className="relative flex items-center">
                <input
                    type="checkbox"
                    checked={checked}
                    onChange={() => setChecked(!checked)}
                    className="appearance-none size-3 rounded-[2px] border border-[#8a8886] checked:border-[#f2c811] checked:bg-[#f2c811]"
                />
                {checked && <Svg w={8} h={6} className="absolute left-[2px] pointer-events-none"><path d="M0.5 2.5 L3 5 L7.5 0.5" stroke={GREY} /></Svg>}
                <span className="w-4 h-[15px] ml-[6px] mr-1">{glyph && <Svg w={16} h={15}>{fieldGlyphs[glyph]}</Svg>}</span>
                {name}
            </label>
        </li>
    );
};

const FieldsPane = () => (
    <aside className="w-[176px] shrink-0 bg-[#f3f2f1] border-l border-[#e1dfdd] text-[#3b3a39] whitespace-nowrap overflow-hidden">
        <div className="flex items-center justify-between h-[39px] pl-2 pr-[2px]">
            <h2 className="text-[15px] font-semibold text-[#252423]">Campos</h2>
            <button className="flex" aria-label="Recolher campos">
                <Chevron dir="right" w={6} h={12} color={INK} />
                <Chevron dir="right" w={6} h={12} color={INK} />
            </button>
        </div>
        <label className="flex items-center gap-[6px] h-[27px] ml-1 mt-[6px] rounded-l-[2px] border border-r-0 border-[#605e5c] bg-white pl-[7px]">
            <SearchGlyph />
            <input className="w-full min-w-0 outline-none placeholder:text-[#484644]" placeholder="Pesquisar" aria-label="Pesquisar campos" />
        </label>
        <ul className="pt-[10px]">
            {tables.map(table => (
                <li key={table.name}>
                    <button className="flex items-center h-6 pl-2" aria-expanded={table.open}>
                        <span className="grid place-items-center w-3 mr-[2px]">
                            {table.open ? <Chevron color="#8a8886" /> : <Chevron dir="right" w={6} h={12} color="#8a8886" />}
                        </span>
                        <TableGlyph checked={table.used} />
                        {table.name}
                    </button>
                    <ul>
                        {table.fields.map(([name, glyph, initial]) => (
                            <FieldRow key={name} name={name} glyph={glyph} initial={initial} />
                        ))}
                    </ul>
                </li>
            ))}
        </ul>
    </aside>
);

export default function App() {
    return (
        <div className="flex flex-col h-screen overflow-hidden bg-[#f3f2f1] font-['Noto_Sans','Open_Sans',sans-serif] text-[11px] text-[#252423]">
            <TitleBar />
            <div className="relative z-30 flex flex-col shrink-0 bg-[#f3f2f1] shadow-[0_1px_4px_rgba(0,0,0,0.18)]">
                <MenuTabs />
                <Ribbon />
            </div>
            <main className="flex flex-1 min-h-0">
                <ViewRail />
                <div className="flex flex-col flex-1 min-w-0">
                    <div className="flex flex-1 min-h-0">
                        <ReportCanvas />
                        <FiltersPane />
                    </div>
                    <PageTabs />
                </div>
                <VisualizationsPane />
                <FieldsPane />
            </main>
            <footer className="flex items-center h-6 shrink-0 border-t border-[#e1dfdd] bg-[#f3f2f1] pl-[5px] text-[#484644]">
                Página 1 de 1
            </footer>
        </div>
    );
}
